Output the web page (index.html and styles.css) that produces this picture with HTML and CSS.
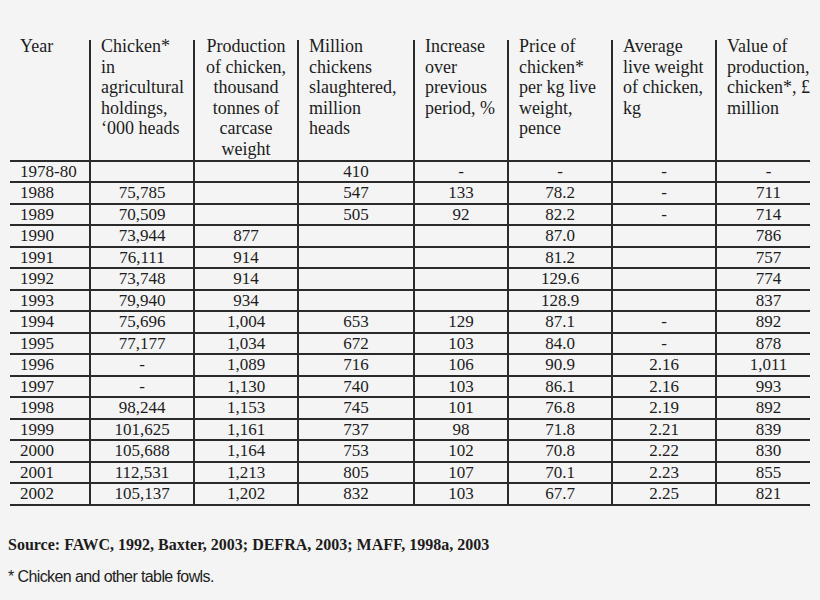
FILE: index.html
```html
<!DOCTYPE html>
<html>
<head>
<meta charset="utf-8">
<link rel="stylesheet" href="styles.css">
</head>
<body>
<div class="page">
  <table class="data">
    <colgroup>
      <col class="c-year"><col class="c-hold"><col class="c-prod"><col class="c-slau">
      <col class="c-inc"><col class="c-price"><col class="c-avg"><col class="c-val">
    </colgroup>
    <thead>
      <tr>
        <th class="left"><div class="h">Year</div></th>
        <th class="left"><div class="h">Chicken*<br>in<br>agricultural<br>holdings,<br>‘000 heads</div></th>
        <th class="center"><div class="h">Production<br>of chicken,<br>thousand<br>tonnes of<br>carcase<br>weight</div></th>
        <th class="left"><div class="h">Million<br>chickens<br>slaughtered,<br>million<br>heads</div></th>
        <th class="left"><div class="h">Increase<br>over<br>previous<br>period, %</div></th>
        <th class="left"><div class="h">Price of<br>chicken*<br>per kg live<br>weight,<br>pence</div></th>
        <th class="left"><div class="h">Average<br>live weight<br>of chicken,<br>kg</div></th>
        <th class="left"><div class="h">Value of<br>production,<br>chicken*, £<br>million</div></th>
      </tr>
    </thead>
    <tbody>
      <tr><td>1978-80</td><td></td><td></td><td>410</td><td>-</td><td>-</td><td>-</td><td>-</td></tr>
      <tr><td>1988</td><td>75,785</td><td></td><td>547</td><td>133</td><td>78.2</td><td>-</td><td>711</td></tr>
      <tr><td>1989</td><td>70,509</td><td></td><td>505</td><td>92</td><td>82.2</td><td>-</td><td>714</td></tr>
      <tr><td>1990</td><td>73,944</td><td>877</td><td></td><td></td><td>87.0</td><td></td><td>786</td></tr>
      <tr><td>1991</td><td>76,111</td><td>914</td><td></td><td></td><td>81.2</td><td></td><td>757</td></tr>
      <tr><td>1992</td><td>73,748</td><td>914</td><td></td><td></td><td>129.6</td><td></td><td>774</td></tr>
      <tr><td>1993</td><td>79,940</td><td>934</td><td></td><td></td><td>128.9</td><td></td><td>837</td></tr>
      <tr><td>1994</td><td>75,696</td><td>1,004</td><td>653</td><td>129</td><td>87.1</td><td>-</td><td>892</td></tr>
      <tr><td>1995</td><td>77,177</td><td>1,034</td><td>672</td><td>103</td><td>84.0</td><td>-</td><td>878</td></tr>
      <tr><td>1996</td><td>-</td><td>1,089</td><td>716</td><td>106</td><td>90.9</td><td>2.16</td><td>1,011</td></tr>
      <tr><td>1997</td><td>-</td><td>1,130</td><td>740</td><td>103</td><td>86.1</td><td>2.16</td><td>993</td></tr>
      <tr><td>1998</td><td>98,244</td><td>1,153</td><td>745</td><td>101</td><td>76.8</td><td>2.19</td><td>892</td></tr>
      <tr><td>1999</td><td>101,625</td><td>1,161</td><td>737</td><td>98</td><td>71.8</td><td>2.21</td><td>839</td></tr>
      <tr><td>2000</td><td>105,688</td><td>1,164</td><td>753</td><td>102</td><td>70.8</td><td>2.22</td><td>830</td></tr>
      <tr><td>2001</td><td>112,531</td><td>1,213</td><td>805</td><td>107</td><td>70.1</td><td>2.23</td><td>855</td></tr>
      <tr><td>2002</td><td>105,137</td><td>1,202</td><td>832</td><td>103</td><td>67.7</td><td>2.25</td><td>821</td></tr>
    </tbody>
  </table>
  <p class="source">Source: FAWC, 1992, Baxter, 2003; DEFRA, 2003; MAFF, 1998a, 2003</p>
  <p class="note">* Chicken and other table fowls.</p>
</div>
</body>
</html>
```
FILE: styles.css
```css
html, body {
  margin: 0;
  padding: 0;
  background: #f4f4f4;
}
body {
  width: 820px;
  height: 600px;
  overflow: hidden;
  color: #1c1c1c;
  font-family: "Liberation Serif", "Times New Roman", serif;
}
.page {
  padding: 40px 10px 0 10px;
}
.data {
  width: 800px;
  border-collapse: collapse;
  table-layout: fixed;
  font-size: 17px;
}
.c-year { width: 80px; }
.c-hold { width: 104px; }
.c-prod { width: 104px; }
.c-slau { width: 116px; }
.c-inc { width: 94px; }
.c-price { width: 104px; }
.c-avg { width: 104px; }
.c-val { width: 94px; }

.data th {
  font-weight: normal;
  font-size: 18px;
  vertical-align: top;
  padding: 0 0 0 10px;
  line-height: 20.6px;
  border-bottom: 2px solid #2a2a2a;
  white-space: nowrap;
}
.data th.left { text-align: left; }
.data th.center { text-align: center; padding: 0; }
.data th .h { margin-top: -4px; }
.data th + th, .data td + td {
  border-left: 2px solid #2a2a2a;
}
.data td {
  padding: 1px 0 0 0;
  line-height: 18.5px;
  text-align: center;
  border-bottom: 2px solid #2a2a2a;
  white-space: nowrap;
}
.data td:first-child {
  text-align: left;
  padding-left: 10px;
}
.data td:last-child {
  padding-left: 10px;
}
.source {
  margin: 29px 0 0 -2px;
  font-weight: bold;
  font-size: 16px;
  line-height: 20px;
}
.note {
  margin: 12px 0 0 -2px;
  font-family: "Liberation Sans", Arial, sans-serif;
  font-size: 16px;
  line-height: 20px;
  letter-spacing: -0.6px;
}
```
